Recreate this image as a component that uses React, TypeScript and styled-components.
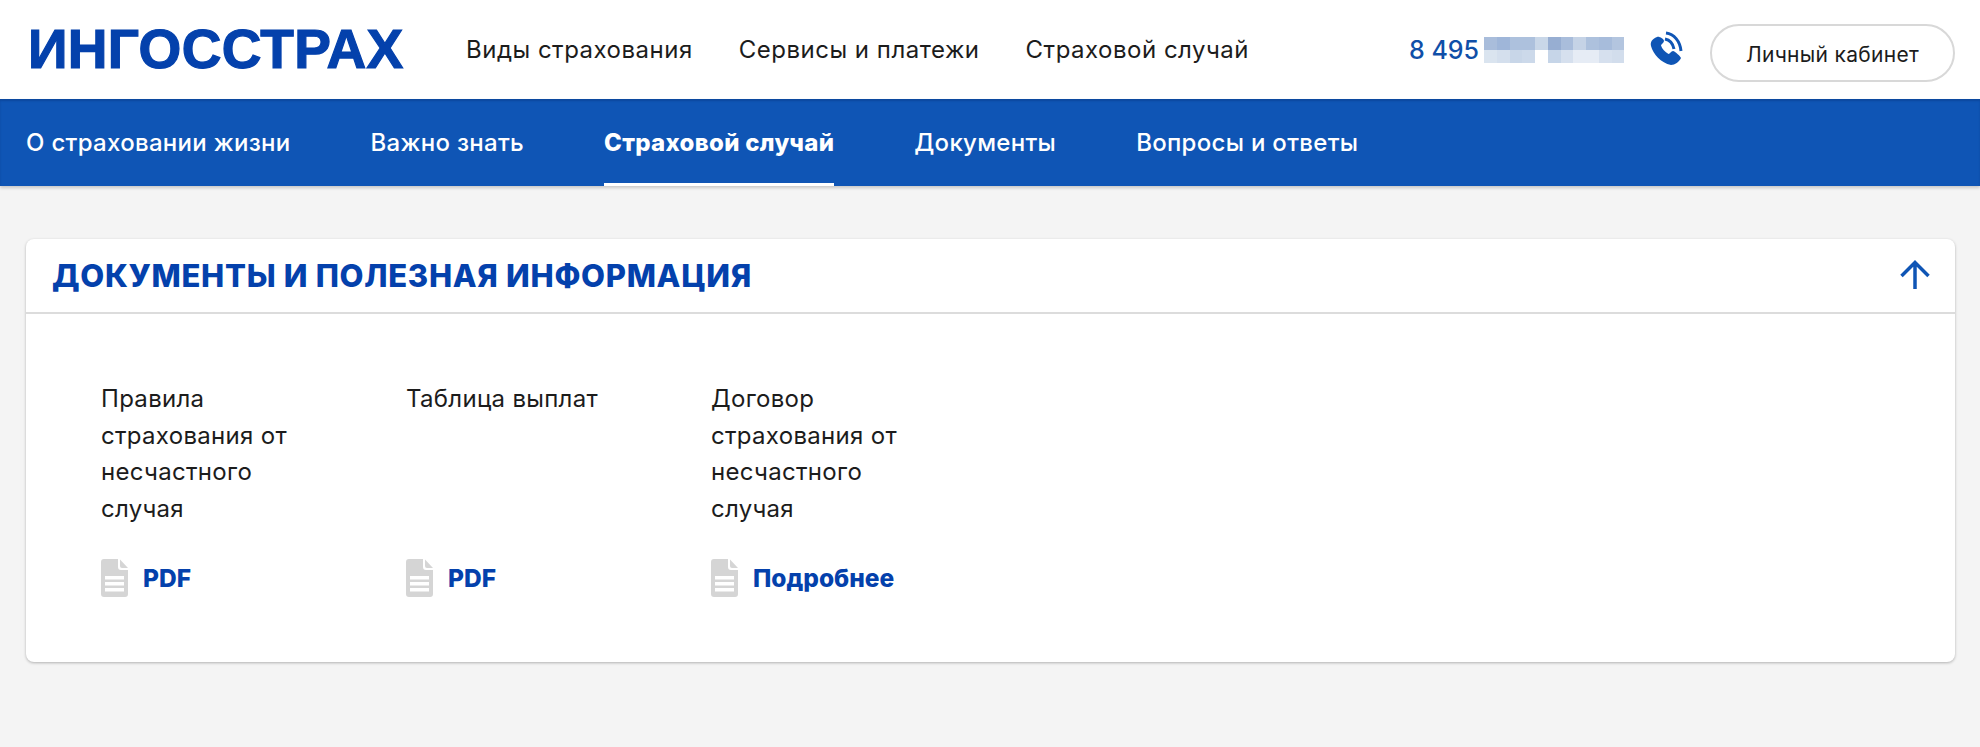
import styled, { createGlobalStyle } from 'styled-components';

const GlobalStyle = createGlobalStyle`
  html, body {
    margin: 0;
    background: #f4f4f4;
    font-family: Inter, 'Open Sans', sans-serif;
    color: #1c1c1c;
  }
  * { box-sizing: border-box; }
`;

const Header = styled.header`
  height: 99px;
  background: #fff;
  display: flex;
  align-items: center;
  padding: 0 25px 0 28px;
`;

const Logo = styled.a`
  font-family: 'Liberation Sans', Arial, sans-serif;
  font-weight: 700;
  font-size: 55px;
  line-height: 1;
  letter-spacing: 0.3px;
  color: #0441ac;
  -webkit-text-stroke: 1.2px #0441ac;
  width: 438px;
  flex: none;
`;

const MainNav = styled.nav`
  display: flex;
  gap: 46px;
  flex: 1;
`;

const MainLink = styled.a`
  font-size: 24px;
  letter-spacing: 0.5px;
  color: #1c1c1c;
  white-space: nowrap;
`;

const Phone = styled.div`
  display: flex;
  align-items: center;
  gap: 5px;
  margin-right: 26px;
  font-size: 25px;
  font-weight: 500;
  color: #0f4fa8;
`;

const PhoneIcon = styled.svg`
  width: 33px;
  height: 34px;
  margin: 0 27px 4px 0;
  color: #0f55b5;
`;

const CabinetButton = styled.button`
  width: 245px;
  height: 58px;
  margin-top: 6px;
  padding-top: 4px;
  border: 2px solid #d8d8d8;
  border-radius: 29px;
  background: #fff;
  font: inherit;
  font-size: 21px;
  letter-spacing: 0.3px;
  color: #1c1c1c;
`;

const SubNav = styled.nav`
  height: 87px;
  background: #0f55b5;
  box-shadow: 0 2px 3px rgba(0, 0, 0, 0.18), inset 0 2px 2px rgba(0, 30, 90, 0.25);
  display: flex;
  gap: 80px;
  padding: 0 26px;
`;

const SubLink = styled.a<{ $active?: boolean }>`
  display: flex;
  align-items: center;
  height: 100%;
  font-size: 24px;
  letter-spacing: 0.3px;
  font-weight: ${({ $active }) => ($active ? 800 : 500)};
  color: #fff;
  white-space: nowrap;
  border-bottom: 3px solid ${({ $active }) => ($active ? '#fff' : 'transparent')};
  border-top: 3px solid transparent;
`;

const Main = styled.main`
  padding: 53px 25px 85px 26px;
`;

const Card = styled.section`
  height: 423px;
  background: #fff;
  border-radius: 8px;
  box-shadow: 0 1px 3px rgba(0, 0, 0, 0.28);
`;

const CardHeader = styled.div`
  height: 75px;
  display: flex;
  align-items: center;
  justify-content: space-between;
  padding: 0 25px 0 26px;
  border-bottom: 2px solid #dcdcdc;
`;

const CardTitle = styled.h2`
  margin: 0;
  font-size: 31px;
  font-weight: 800;
  color: #0441ac;
  letter-spacing: 0.7px;
`;

const ArrowIcon = styled.svg`
  width: 30px;
  height: 30px;
  margin-bottom: 2px;
  color: #0f55b5;
`;

const Docs = styled.div`
  display: flex;
  gap: 105px;
  padding: 67px 75px 0;
`;

const Doc = styled.article`
  width: 200px;
  display: flex;
  flex-direction: column;
  gap: 32px;
`;

const DocName = styled.p`
  margin: 0;
  height: 146px;
  font-size: 24px;
  letter-spacing: 0.3px;
  line-height: 36.6px;
`;

const DocLink = styled.a`
  display: flex;
  align-items: center;
  gap: 15px;
  font-size: 24.5px;
  font-weight: 800;
  color: #0441ac;
  white-space: nowrap;
`;

const FileIcon = styled.svg`
  width: 27px;
  height: 38px;
  flex: none;
`;

// pixelated part of the phone number
const mosaic = [
  ['#a9bddb', '#9fb6d9', '#adc1dd', '#adc1dd', '#c9d7e8', '#97aed2', '#a9bddb', '#c5d3e6', '#adc1dd', '#a7bcdb', '#b3c5df'],
  ['#dae4ef', '#d4dfed', '#c8d6e8', '#ccd9ea', '#ffffff', '#c6d5e8', '#d6e0ee', '#e6ecf5', '#e6ecf5', '#d6e0ee', '#d2ddec'],
];

const Mosaic = () => (
  <svg width="140" height="26" viewBox="0 0 140 26" shapeRendering="crispEdges">
    {mosaic.map((row, y) =>
      row.map((fill, x) => (
        <rect key={`${x}-${y}`} x={x * 12.75} y={y * 13} width="12.75" height="13" fill={fill} />
      )),
    )}
  </svg>
);

const File = () => (
  <FileIcon viewBox="0 0 27 38">
    <path
      d="M3 0H17V8a3 3 0 0 0 3 3h7V35a3 3 0 0 1-3 3H3a3 3 0 0 1-3-3V3a3 3 0 0 1 3-3Z"
      fill="#d5d5d5"
    />
    <path d="M19 0.5 27 9H21a2 2 0 0 1-2-2Z" fill="#d5d5d5" />
    <path d="M4 17H23V20.500H4ZM4 23H23V26.500H4ZM4 29H23V32.500H4Z" fill="#fff" />
  </FileIcon>
);

const docs = [
  { name: 'Правила страхования от несчастного случая', link: 'PDF' },
  { name: 'Таблица выплат', link: 'PDF' },
  { name: 'Договор страхования от несчастного случая', link: 'Подробнее' },
];

export default function App() {
  return (
    <>
      <GlobalStyle />
      <Header>
        <Logo>ИНГОССТРАХ</Logo>
        <MainNav>
          <MainLink>Виды страхования</MainLink>
          <MainLink>Сервисы и платежи</MainLink>
          <MainLink>Страховой случай</MainLink>
        </MainNav>
        <Phone>
          8 495
          <Mosaic />
        </Phone>
        <PhoneIcon viewBox="0 0 33 34" fill="none">
          <path
            d="M7 6C2 8 0 11 1 15C3 23 11 32 21 34C25 34 29 31 31 27C31 26 25 20 23 20C21 20 20 23 18.500 23C15 21 12 18 11 14.500C11 13 14 12 14 10C14 8 9 5 7 6Z"
            fill="currentColor"
          />
          <path d="M15 8C20 9 23 13 24 18" stroke="currentColor" strokeWidth="3" />
          <path d="M16 2C24 3 30 10 31 20" stroke="currentColor" strokeWidth="3" />
        </PhoneIcon>
        <CabinetButton>Личный кабинет</CabinetButton>
      </Header>
      <SubNav>
        <SubLink>О страховании жизни</SubLink>
        <SubLink>Важно знать</SubLink>
        <SubLink $active>Страховой случай</SubLink>
        <SubLink>Документы</SubLink>
        <SubLink>Вопросы и ответы</SubLink>
      </SubNav>
      <Main>
        <Card>
          <CardHeader>
            <CardTitle>ДОКУМЕНТЫ И ПОЛЕЗНАЯ ИНФОРМАЦИЯ</CardTitle>
            <ArrowIcon viewBox="0 0 30 30" fill="none">
              <path d="M15 29V2.500M1.500 16 15 2.500 28.500 16" stroke="currentColor" strokeWidth="3.5" />
            </ArrowIcon>
          </CardHeader>
          <Docs>
            {docs.map(doc => (
              <Doc key={doc.name}>
                <DocName>{doc.name}</DocName>
                <DocLink>
                  <File />
                  {doc.link}
                </DocLink>
              </Doc>
            ))}
          </Docs>
        </Card>
      </Main>
    </>
  );
}
